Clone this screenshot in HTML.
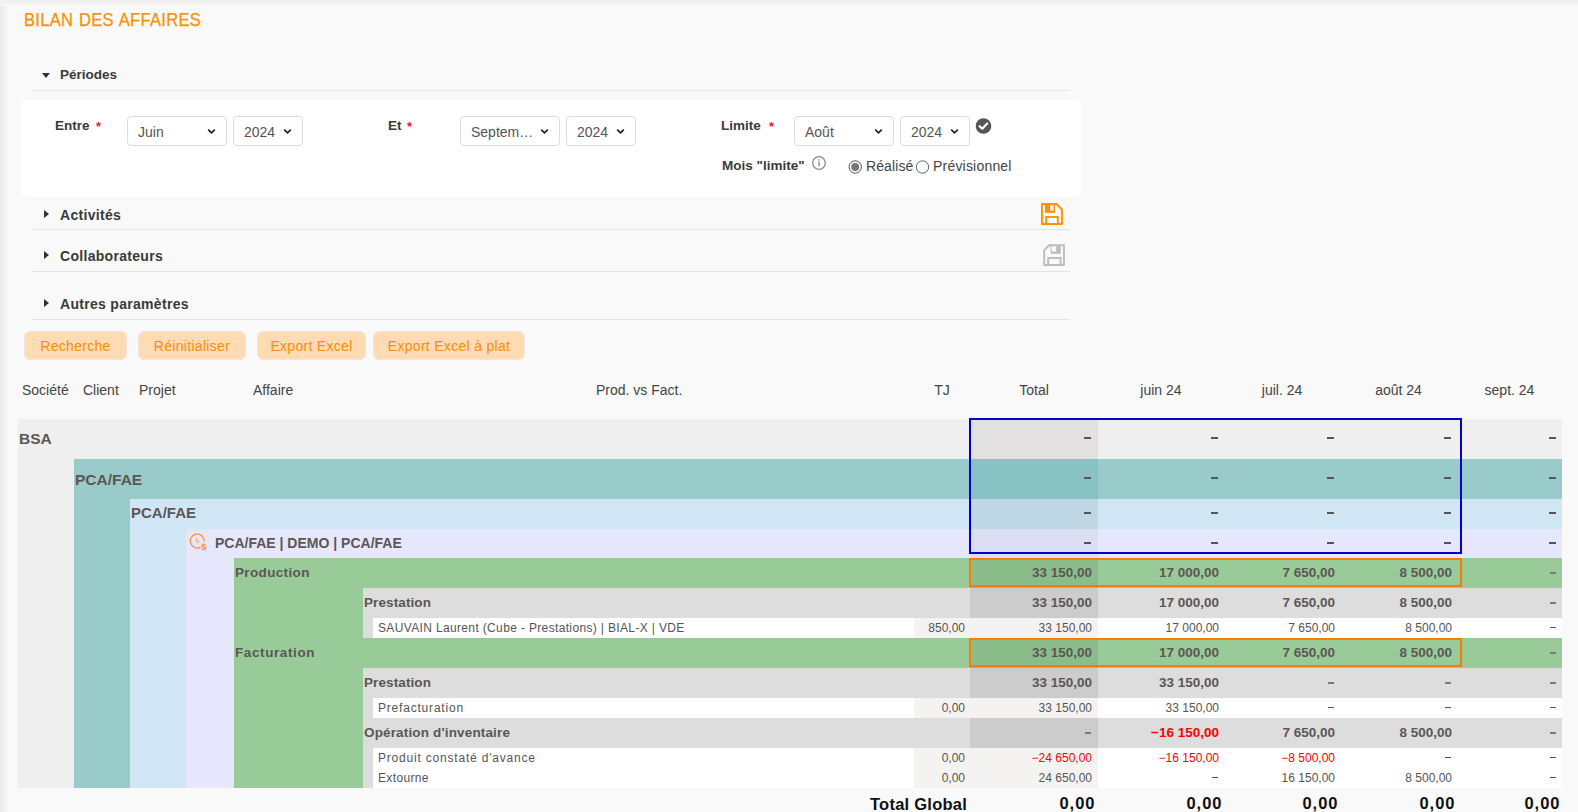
<!DOCTYPE html>
<html><head><meta charset="utf-8"><style>
*{box-sizing:border-box;margin:0;padding:0}
html,body{width:1578px;height:812px;overflow:hidden;background:#f9f9f9;font-family:"Liberation Sans",sans-serif;color:#444}
.a{position:absolute;white-space:nowrap;line-height:1}
.blk{position:absolute}
.sec{font-size:13.5px;font-weight:bold;color:#3a3a3a}
.caret{position:absolute;width:0;height:0;border-left:4px solid transparent;border-right:4px solid transparent;border-top:5px solid #333}
.caretr{position:absolute;width:0;height:0;border-top:4px solid transparent;border-bottom:4px solid transparent;border-left:5px solid #333}
.hline{position:absolute;height:1px;background:#e3e3e3;left:32px;width:1038px}
.lbl{font-size:13.5px;font-weight:bold;color:#3a3a3a}
.req{position:absolute;color:#f0142d;font-weight:bold;font-size:13px;line-height:1}
.sel{position:absolute;height:30px;border:1px solid #dcdcdc;border-radius:4px;background:#fff}
.sel span{position:absolute;left:10px;top:8px;font-size:14px;line-height:1;color:#555;white-space:nowrap}
.chev{position:absolute;width:5px;height:5px;border-right:2px solid #222;border-bottom:2px solid #222;transform:rotate(45deg)}
.btn{position:absolute;top:331px;height:29px;background:#fedbb3;border-radius:6px;border:1px solid #f1e6df}
.btn span{position:absolute;top:7px;left:0;right:0;text-align:center;font-size:14px;letter-spacing:0.3px;line-height:1;color:#fb8c0e;white-space:nowrap}
.th{position:absolute;top:383px;font-size:14px;line-height:1;color:#444;text-align:center;white-space:nowrap}
</style></head><body>
<div class="blk" style="left:0;top:0;width:9px;height:812px;background:linear-gradient(to right,#e9e9e9,#f9f9f9)"></div>
<div class="blk" style="left:0;top:0;width:1578px;height:6px;background:linear-gradient(to bottom,#eeeeee,#f9f9f9)"></div>
<div class="a" style="left:24px;top:11px;font-size:18px;word-spacing:1px;letter-spacing:0.3px;transform:scaleX(0.92);transform-origin:0 0;color:#ff8f00;-webkit-text-stroke:0.25px #ff8f00">BILAN DES AFFAIRES</div>
<div class="caret" style="left:42px;top:73px"></div>
<div class="a sec" style="left:60px;top:68px">Périodes</div>
<div class="hline" style="top:90px"></div>
<div class="blk" style="left:21px;top:100px;width:1060px;height:97px;background:#fff;border-radius:5px"></div>
<div class="a lbl" style="left:55px;top:119px">Entre</div>
<div class="req" style="left:96px;top:120px">*</div>
<div class="sel" style="left:127px;top:116px;width:100px"><span>Juin</span><svg style="position:absolute;left:79px;top:10.5px" width="9" height="7" viewBox="0 0 9 7"><path d="M1.2 1.6 L4.5 4.9 L7.8 1.6" stroke="#222" stroke-width="1.7" fill="none"/></svg></div>
<div class="sel" style="left:233px;top:116px;width:70px"><span>2024</span><svg style="position:absolute;left:49px;top:10.5px" width="9" height="7" viewBox="0 0 9 7"><path d="M1.2 1.6 L4.5 4.9 L7.8 1.6" stroke="#222" stroke-width="1.7" fill="none"/></svg></div>
<div class="a lbl" style="left:388px;top:119px">Et</div>
<div class="req" style="left:407px;top:120px">*</div>
<div class="sel" style="left:460px;top:116px;width:100px"><span>Septem…</span><svg style="position:absolute;left:79px;top:10.5px" width="9" height="7" viewBox="0 0 9 7"><path d="M1.2 1.6 L4.5 4.9 L7.8 1.6" stroke="#222" stroke-width="1.7" fill="none"/></svg></div>
<div class="sel" style="left:566px;top:116px;width:70px"><span>2024</span><svg style="position:absolute;left:49px;top:10.5px" width="9" height="7" viewBox="0 0 9 7"><path d="M1.2 1.6 L4.5 4.9 L7.8 1.6" stroke="#222" stroke-width="1.7" fill="none"/></svg></div>
<div class="a lbl" style="left:721px;top:119px">Limite</div>
<div class="req" style="left:769px;top:120px">*</div>
<div class="sel" style="left:794px;top:116px;width:100px"><span>Août</span><svg style="position:absolute;left:79px;top:10.5px" width="9" height="7" viewBox="0 0 9 7"><path d="M1.2 1.6 L4.5 4.9 L7.8 1.6" stroke="#222" stroke-width="1.7" fill="none"/></svg></div>
<div class="sel" style="left:900px;top:116px;width:70px"><span>2024</span><svg style="position:absolute;left:49px;top:10.5px" width="9" height="7" viewBox="0 0 9 7"><path d="M1.2 1.6 L4.5 4.9 L7.8 1.6" stroke="#222" stroke-width="1.7" fill="none"/></svg></div>
<svg class="blk" style="left:975px;top:118px" width="17" height="17" viewBox="0 0 17 17"><circle cx="8.5" cy="8" r="7.8" fill="#555"/><path d="M4.6 8.2 L7.3 10.8 L12.2 5.6" stroke="#fff" stroke-width="2.2" fill="none" stroke-linecap="round" stroke-linejoin="round"/></svg>
<div class="a lbl" style="left:722px;top:159px">Mois "limite"</div>
<svg class="blk" style="left:811px;top:156px" width="16" height="14" viewBox="0 0 16 14"><circle cx="8" cy="7" r="6.3" stroke="#8c8c8c" stroke-width="1.3" fill="none"/><rect x="7.3" y="5.5" width="1.4" height="4.8" fill="#8c8c8c"/><rect x="7.3" y="3.2" width="1.4" height="1.4" fill="#8c8c8c"/></svg>
<svg class="blk" style="left:848px;top:160px" width="15" height="15" viewBox="0 0 15 15"><circle cx="7.2" cy="7" r="6.2" stroke="#555" stroke-width="1" fill="#fff"/><circle cx="7.2" cy="7" r="4" fill="#777"/></svg>
<div class="a" style="left:866px;top:159px;font-size:14px;letter-spacing:0.1px;color:#444">Réalisé</div>
<svg class="blk" style="left:915px;top:160px" width="15" height="15" viewBox="0 0 15 15"><circle cx="7.5" cy="7" r="6.2" stroke="#666" stroke-width="1" fill="#fff"/></svg>
<div class="a" style="left:933px;top:159px;font-size:14px;letter-spacing:0.2px;color:#444">Prévisionnel</div>
<div class="caretr" style="left:44px;top:210px"></div>
<div class="a sec" style="left:60px;top:208px;font-size:14px;letter-spacing:0.3px">Activités</div>
<div class="hline" style="top:229px"></div>
<div class="caretr" style="left:44px;top:251px"></div>
<div class="a sec" style="left:60px;top:249px;font-size:14px;letter-spacing:0.3px">Collaborateurs</div>
<div class="hline" style="top:271px"></div>
<div class="caretr" style="left:44px;top:299px"></div>
<div class="a sec" style="left:60px;top:297px;font-size:14px;letter-spacing:0.3px">Autres paramètres</div>
<div class="hline" style="top:319px"></div>
<svg class="blk" style="left:1040px;top:202px" width="24" height="24" viewBox="0 0 24 24"><path d="M2 2 H16.5 L22 7.5 V22 H2 Z" stroke="#ff9100" stroke-width="1.9" fill="none" stroke-linejoin="round"/><rect x="5" y="2" width="10" height="8.8" fill="#ff9100"/><rect x="10.2" y="3.2" width="3.3" height="5.4" fill="#fdf8f2"/><rect x="6.2" y="15" width="11.6" height="7" stroke="#ff9100" stroke-width="1.9" fill="none"/></svg>
<svg class="blk" style="left:1042px;top:243px" width="24" height="24" viewBox="0 0 24 24"><path d="M2.2 22 V7.3 L7.2 2.2 H22 V22 Z" stroke="#bdbdbd" stroke-width="1.9" fill="none" stroke-linejoin="round"/><rect x="8.6" y="2" width="10.2" height="8.8" fill="#bdbdbd"/><rect x="9.7" y="3.2" width="4.5" height="5.4" fill="#f9f9f9"/><rect x="6.2" y="15" width="12.4" height="7" stroke="#bdbdbd" stroke-width="1.9" fill="none"/></svg>
<div class="btn" style="left:24px;width:103px"><span>Recherche</span></div>
<div class="btn" style="left:138px;width:108px"><span>Réinitialiser</span></div>
<div class="btn" style="left:257px;width:109px"><span>Export Excel</span></div>
<div class="btn" style="left:373px;width:152px"><span>Export Excel à plat</span></div>
<div class="th" style="left:22px">Société</div>
<div class="th" style="left:83px">Client</div>
<div class="th" style="left:139px">Projet</div>
<div class="th" style="left:253px">Affaire</div>
<div class="th" style="left:596px">Prod. vs Fact.</div>
<div class="th" style="left:914px;width:56px">TJ</div>
<div class="th" style="left:970px;width:128px">Total</div>
<div class="th" style="left:1098px;width:126px">juin 24</div>
<div class="th" style="left:1224px;width:116px">juil. 24</div>
<div class="th" style="left:1340px;width:117px">août 24</div>
<div class="th" style="left:1457px;width:105px">sept. 24</div>
<div class="blk" style="left:18px;top:419px;width:1544px;height:369px;background:#efefef;"></div>
<div class="blk" style="left:74px;top:459px;width:1488px;height:329px;background:#99cbcb;"></div>
<div class="blk" style="left:130px;top:499px;width:1432px;height:289px;background:#d0e6f4;"></div>
<div class="blk" style="left:186px;top:529px;width:1376px;height:259px;background:#e6e6fc;"></div>
<div class="blk" style="left:234px;top:558px;width:1328px;height:230px;background:#99cb99;"></div>
<div class="blk" style="left:363px;top:588px;width:1199px;height:50px;background:#dddddd;"></div>
<div class="blk" style="left:363px;top:668px;width:1199px;height:120px;background:#dddddd;"></div>
<div class="blk" style="left:373px;top:618px;width:1189px;height:20px;background:#ffffff;"></div>
<div class="blk" style="left:914px;top:618px;width:184px;height:20px;background:#f5f2f2;"></div>
<div class="blk" style="left:373px;top:698px;width:1189px;height:20px;background:#ffffff;"></div>
<div class="blk" style="left:914px;top:698px;width:184px;height:20px;background:#f5f2f2;"></div>
<div class="blk" style="left:373px;top:748px;width:1189px;height:40px;background:#ffffff;"></div>
<div class="blk" style="left:914px;top:748px;width:184px;height:40px;background:#f5f2f2;"></div>
<div class="blk" style="left:970px;top:419px;width:128px;height:40px;background:#e2e0e0;"></div>
<div class="blk" style="left:970px;top:459px;width:128px;height:40px;background:#88c3c3;"></div>
<div class="blk" style="left:970px;top:499px;width:128px;height:30px;background:#bfd7e5;"></div>
<div class="blk" style="left:970px;top:529px;width:128px;height:29px;background:#dcdcf3;"></div>
<div class="blk" style="left:970px;top:558px;width:128px;height:30px;background:#8bbd8b;"></div>
<div class="blk" style="left:970px;top:588px;width:128px;height:30px;background:#cccccc;"></div>
<div class="blk" style="left:970px;top:638px;width:128px;height:30px;background:#8bbd8b;"></div>
<div class="blk" style="left:970px;top:668px;width:128px;height:30px;background:#cccccc;"></div>
<div class="blk" style="left:970px;top:718px;width:128px;height:30px;background:#cccccc;"></div>
<div class="blk" style="left:969px;top:418px;width:493px;height:136px;border:2px solid #0000cc"></div>
<div class="blk" style="left:969px;top:558px;width:493px;height:29px;border:2px solid #fb7c00"></div>
<div class="blk" style="left:969px;top:638px;width:493px;height:29px;border:2px solid #fb7c00"></div>
<div class="a" style="left:19px;top:431px;font-size:15.5px;letter-spacing:0px;font-weight:bold;color:#5c5656">BSA</div>
<div class="a" style="left:75px;top:472px;font-size:15.5px;letter-spacing:0px;font-weight:bold;color:#5c5656">PCA/FAE</div>
<div class="a" style="left:131px;top:505px;font-size:15px;letter-spacing:0px;font-weight:bold;color:#5c5656">PCA/FAE</div>
<div class="a" style="left:215px;top:536px;font-size:14px;letter-spacing:0px;font-weight:bold;color:#5c5656">PCA/FAE | DEMO | PCA/FAE</div>
<svg class="blk" style="left:189px;top:533px" width="19" height="18" viewBox="0 0 19 18"><path d="M15.2 8.5 A7 7 0 1 0 11.5 14.2" stroke="#ff8f1a" stroke-width="1.2" fill="none"/><path d="M7.6 5.2 V8.8 H10.6" stroke="#ff9a55" stroke-width="1" fill="none"/><text x="12.3" y="16.6" font-family="Liberation Sans" font-weight="bold" font-size="9.5" fill="#ff8f1a">$</text></svg><div class="a" style="left:235px;top:566px;font-size:13.5px;letter-spacing:0.35px;font-weight:bold;color:#5c5656">Production</div>
<div class="a" style="left:364px;top:596px;font-size:13.5px;letter-spacing:0.1px;font-weight:bold;color:#5c5656">Prestation</div>
<div class="a" style="left:378px;top:622px;font-size:12px;letter-spacing:0.35px;color:#555">SAUVAIN Laurent (Cube - Prestations) | BIAL-X | VDE</div>
<div class="a" style="left:235px;top:646px;font-size:13.5px;letter-spacing:0.6px;font-weight:bold;color:#5c5656">Facturation</div>
<div class="a" style="left:364px;top:676px;font-size:13.5px;letter-spacing:0.1px;font-weight:bold;color:#5c5656">Prestation</div>
<div class="a" style="left:378px;top:702px;font-size:12px;letter-spacing:0.8px;color:#555">Prefacturation</div>
<div class="a" style="left:364px;top:726px;font-size:13.5px;letter-spacing:0.15px;font-weight:bold;color:#5c5656">Opération d'inventaire</div>
<div class="a" style="left:378px;top:752px;font-size:12px;letter-spacing:0.8px;color:#555">Produit constaté d'avance</div>
<div class="a" style="left:378px;top:772px;font-size:12px;letter-spacing:0.35px;color:#555">Extourne</div>
<div class="a" style="left:870px;top:796px;font-size:16.5px;letter-spacing:0.25px;font-weight:bold;color:#111">Total Global</div>
<div class="blk" style="left:1084px;top:437px;width:7px;height:2px;background:#555"></div>
<div class="blk" style="left:1211px;top:437px;width:7px;height:2px;background:#555"></div>
<div class="blk" style="left:1327px;top:437px;width:7px;height:2px;background:#555"></div>
<div class="blk" style="left:1444px;top:437px;width:7px;height:2px;background:#555"></div>
<div class="blk" style="left:1549px;top:437px;width:7px;height:2px;background:#555"></div>
<div class="blk" style="left:1084px;top:477px;width:7px;height:2px;background:#555"></div>
<div class="blk" style="left:1211px;top:477px;width:7px;height:2px;background:#555"></div>
<div class="blk" style="left:1327px;top:477px;width:7px;height:2px;background:#555"></div>
<div class="blk" style="left:1444px;top:477px;width:7px;height:2px;background:#555"></div>
<div class="blk" style="left:1549px;top:477px;width:7px;height:2px;background:#555"></div>
<div class="blk" style="left:1084px;top:512px;width:7px;height:2px;background:#555"></div>
<div class="blk" style="left:1211px;top:512px;width:7px;height:2px;background:#555"></div>
<div class="blk" style="left:1327px;top:512px;width:7px;height:2px;background:#555"></div>
<div class="blk" style="left:1444px;top:512px;width:7px;height:2px;background:#555"></div>
<div class="blk" style="left:1549px;top:512px;width:7px;height:2px;background:#555"></div>
<div class="blk" style="left:1084px;top:542px;width:7px;height:2px;background:#555"></div>
<div class="blk" style="left:1211px;top:542px;width:7px;height:2px;background:#555"></div>
<div class="blk" style="left:1327px;top:542px;width:7px;height:2px;background:#555"></div>
<div class="blk" style="left:1444px;top:542px;width:7px;height:2px;background:#555"></div>
<div class="blk" style="left:1549px;top:542px;width:7px;height:2px;background:#555"></div>
<div class="a" style="right:486px;top:566px;font-size:13.5px;letter-spacing:0px;font-weight:bold;color:#5c5656">33 150,00</div>
<div class="a" style="right:359px;top:566px;font-size:13.5px;letter-spacing:0px;font-weight:bold;color:#5c5656">17 000,00</div>
<div class="a" style="right:243px;top:566px;font-size:13.5px;letter-spacing:0px;font-weight:bold;color:#5c5656">7 650,00</div>
<div class="a" style="right:126px;top:566px;font-size:13.5px;letter-spacing:0px;font-weight:bold;color:#5c5656">8 500,00</div>
<div class="blk" style="left:1550px;top:572px;width:6px;height:2px;background:#7a7a7a"></div>
<div class="a" style="right:486px;top:596px;font-size:13.5px;letter-spacing:0px;font-weight:bold;color:#5c5656">33 150,00</div>
<div class="a" style="right:359px;top:596px;font-size:13.5px;letter-spacing:0px;font-weight:bold;color:#5c5656">17 000,00</div>
<div class="a" style="right:243px;top:596px;font-size:13.5px;letter-spacing:0px;font-weight:bold;color:#5c5656">7 650,00</div>
<div class="a" style="right:126px;top:596px;font-size:13.5px;letter-spacing:0px;font-weight:bold;color:#5c5656">8 500,00</div>
<div class="blk" style="left:1550px;top:602px;width:6px;height:2px;background:#7a7a7a"></div>
<div class="a" style="right:613px;top:622px;font-size:12px;letter-spacing:0px;color:#555">850,00</div>
<div class="a" style="right:486px;top:622px;font-size:12px;letter-spacing:0px;color:#555">33 150,00</div>
<div class="a" style="right:359px;top:622px;font-size:12px;letter-spacing:0px;color:#555">17 000,00</div>
<div class="a" style="right:243px;top:622px;font-size:12px;letter-spacing:0px;color:#555">7 650,00</div>
<div class="a" style="right:126px;top:622px;font-size:12px;letter-spacing:0px;color:#555">8 500,00</div>
<div class="blk" style="left:1550px;top:627px;width:6px;height:1px;background:#555"></div>
<div class="a" style="right:486px;top:646px;font-size:13.5px;letter-spacing:0px;font-weight:bold;color:#5c5656">33 150,00</div>
<div class="a" style="right:359px;top:646px;font-size:13.5px;letter-spacing:0px;font-weight:bold;color:#5c5656">17 000,00</div>
<div class="a" style="right:243px;top:646px;font-size:13.5px;letter-spacing:0px;font-weight:bold;color:#5c5656">7 650,00</div>
<div class="a" style="right:126px;top:646px;font-size:13.5px;letter-spacing:0px;font-weight:bold;color:#5c5656">8 500,00</div>
<div class="blk" style="left:1550px;top:652px;width:6px;height:2px;background:#7a7a7a"></div>
<div class="a" style="right:486px;top:676px;font-size:13.5px;letter-spacing:0px;font-weight:bold;color:#5c5656">33 150,00</div>
<div class="a" style="right:359px;top:676px;font-size:13.5px;letter-spacing:0px;font-weight:bold;color:#5c5656">33 150,00</div>
<div class="blk" style="left:1328px;top:682px;width:6px;height:2px;background:#7a7a7a"></div>
<div class="blk" style="left:1445px;top:682px;width:6px;height:2px;background:#7a7a7a"></div>
<div class="blk" style="left:1550px;top:682px;width:6px;height:2px;background:#7a7a7a"></div>
<div class="a" style="right:613px;top:702px;font-size:12px;letter-spacing:0px;color:#555">0,00</div>
<div class="a" style="right:486px;top:702px;font-size:12px;letter-spacing:0px;color:#555">33 150,00</div>
<div class="a" style="right:359px;top:702px;font-size:12px;letter-spacing:0px;color:#555">33 150,00</div>
<div class="blk" style="left:1328px;top:707px;width:6px;height:1px;background:#555"></div>
<div class="blk" style="left:1445px;top:707px;width:6px;height:1px;background:#555"></div>
<div class="blk" style="left:1550px;top:707px;width:6px;height:1px;background:#555"></div>
<div class="blk" style="left:1085px;top:732px;width:6px;height:2px;background:#7a7a7a"></div>
<div class="a" style="right:359px;top:726px;font-size:13.5px;letter-spacing:0px;font-weight:bold;color:#ff0000">&minus;16 150,00</div>
<div class="a" style="right:243px;top:726px;font-size:13.5px;letter-spacing:0px;font-weight:bold;color:#5c5656">7 650,00</div>
<div class="a" style="right:126px;top:726px;font-size:13.5px;letter-spacing:0px;font-weight:bold;color:#5c5656">8 500,00</div>
<div class="blk" style="left:1550px;top:732px;width:6px;height:2px;background:#7a7a7a"></div>
<div class="a" style="right:613px;top:752px;font-size:12px;letter-spacing:0px;color:#555">0,00</div>
<div class="a" style="right:486px;top:752px;font-size:12px;letter-spacing:0px;color:#ff0000">&minus;24 650,00</div>
<div class="a" style="right:359px;top:752px;font-size:12px;letter-spacing:0px;color:#ff0000">&minus;16 150,00</div>
<div class="a" style="right:243px;top:752px;font-size:12px;letter-spacing:0px;color:#ff0000">&minus;8 500,00</div>
<div class="blk" style="left:1445px;top:757px;width:6px;height:1px;background:#555"></div>
<div class="blk" style="left:1550px;top:757px;width:6px;height:1px;background:#555"></div>
<div class="a" style="right:613px;top:772px;font-size:12px;letter-spacing:0px;color:#555">0,00</div>
<div class="a" style="right:486px;top:772px;font-size:12px;letter-spacing:0px;color:#555">24 650,00</div>
<div class="blk" style="left:1212px;top:777px;width:6px;height:1px;background:#555"></div>
<div class="a" style="right:243px;top:772px;font-size:12px;letter-spacing:0px;color:#555">16 150,00</div>
<div class="a" style="right:126px;top:772px;font-size:12px;letter-spacing:0px;color:#555">8 500,00</div>
<div class="blk" style="left:1550px;top:777px;width:6px;height:1px;background:#555"></div>
<div class="a" style="right:482.5px;top:795px;font-size:16.5px;letter-spacing:1px;font-weight:bold;color:#111">0,00</div>
<div class="a" style="right:355.5px;top:795px;font-size:16.5px;letter-spacing:1px;font-weight:bold;color:#111">0,00</div>
<div class="a" style="right:239.5px;top:795px;font-size:16.5px;letter-spacing:1px;font-weight:bold;color:#111">0,00</div>
<div class="a" style="right:122.5px;top:795px;font-size:16.5px;letter-spacing:1px;font-weight:bold;color:#111">0,00</div>
<div class="a" style="right:17.5px;top:795px;font-size:16.5px;letter-spacing:1px;font-weight:bold;color:#111">0,00</div>
</body></html>
